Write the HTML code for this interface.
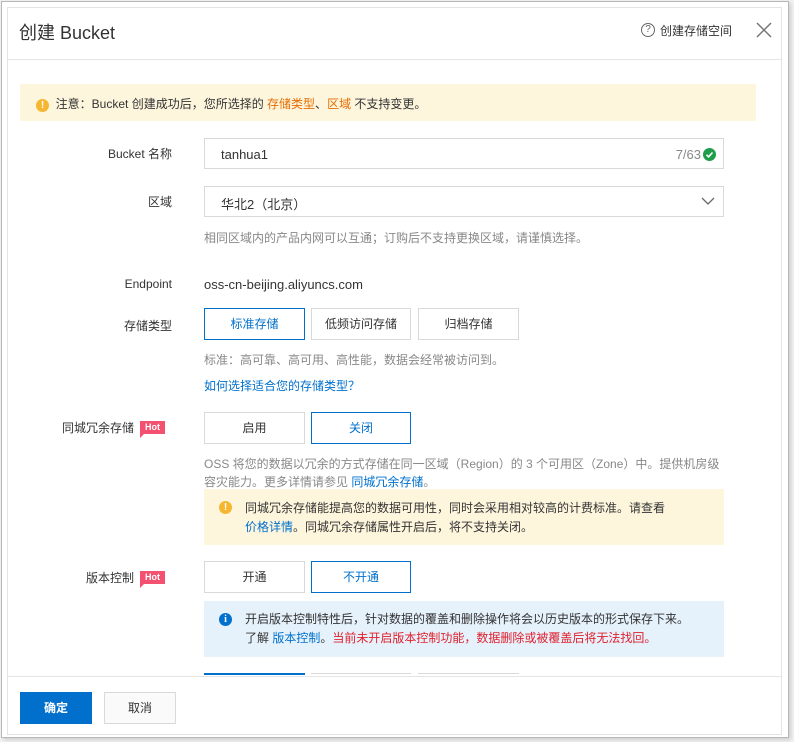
<!DOCTYPE html>
<html><head><meta charset="utf-8">
<style>
*{box-sizing:border-box;margin:0;padding:0}
body{width:794px;height:742px;background:#f2f2f2;font-family:"Liberation Sans","Noto Sans CJK SC",sans-serif;font-size:12px;color:#333;position:relative;overflow:hidden}
.win{position:absolute;left:1px;top:1px;width:788px;height:737px;background:#fff;border:1px solid #b8b8b8;box-shadow:2px 2px 4px rgba(0,0,0,.15)}
.dlg{position:absolute;left:7px;top:7px;width:775px;height:728px;border:1px solid #e3e3e3;background:#fff;overflow:hidden}
.a{position:absolute}
.lbl{position:absolute;right:609px;text-align:right;font-size:12px;color:#333;white-space:nowrap}
.btn{position:absolute;height:32px;border:1px solid #d9d9d9;background:#fff;text-align:center;line-height:30px;font-size:12px;color:#333}
.sel{border-color:#0070cc;color:#0070cc}
.hint{position:absolute;left:196px;color:#888;font-size:12px}
.link{color:#0070cc}
.hot{display:inline-block;position:relative;background:#f4506f;color:#fff;font-size:9px;font-weight:bold;line-height:13px;padding:0 5px;vertical-align:2px;margin-left:6px}
.hot:after{content:"";position:absolute;left:0;bottom:-4px;border-left:4px solid #f4506f;border-bottom:4px solid transparent}
.warn{display:inline-block;width:13px;height:13px;border-radius:50%;background:#f5b731;color:#fff;font-size:10px;font-weight:bold;text-align:center;line-height:13px}
</style></head><body>
<div class="win"></div>
<div class="dlg">
  <div class="a" style="left:11px;top:11px;font-size:18px;color:#333">创建 Bucket</div>
  <div class="a" style="left:633px;top:15px;width:14px;height:14px;border:1px solid #666;border-radius:50%;font-size:10px;text-align:center;line-height:12px;color:#666">?</div>
  <div class="a" style="left:652px;top:14px;font-size:12px;color:#333">创建存储空间</div>
  <svg class="a" style="left:748px;top:14px" width="16" height="16"><path d="M1 1L15 15M15 1L1 15" stroke="#777" stroke-width="1.5"/></svg>
  <div class="a" style="left:0;top:51px;width:775px;border-top:1px solid #e5e5e5"></div>

  <div class="a" style="left:12px;top:76px;width:736px;height:37px;background:#fdf6dd;padding:11px 0 0 16px;color:#333">
    <span class="warn">!</span>&nbsp; 注意：Bucket 创建成功后，您所选择的 <span style="color:#e76c00">存储类型</span>、<span style="color:#e76c00">区域</span> 不支持变更。
  </div>

  <div class="lbl" style="top:137px">Bucket 名称</div>
  <div class="a" style="left:196px;top:130px;width:520px;height:31px;border:1px solid #d9d9d9;padding:8px 0 0 16px;font-size:13px">tanhua1
    <span class="a" style="right:22px;top:8px;color:#888;font-size:13px">7/63</span>
    <span class="a" style="right:7px;top:9px;width:13px;height:13px;border-radius:50%;background:#1e9e4a"><svg width="13" height="13" style="position:absolute;left:0;top:0"><path d="M3.5 6.8L5.6 8.8L9.5 4.5" stroke="#fff" stroke-width="1.6" fill="none"/></svg></span>
  </div>

  <div class="lbl" style="top:185px">区域</div>
  <div class="a" style="left:196px;top:178px;width:520px;height:31px;border:1px solid #d9d9d9;padding:7px 0 0 16px;font-size:13px">华北2（北京）
    <svg class="a" style="right:8px;top:9px" width="14" height="10"><path d="M1 2L7 8L13 2" stroke="#666" stroke-width="1.3" fill="none"/></svg>
  </div>
  <div class="hint" style="top:221px">相同区域内的产品内网可以互通；订购后不支持更换区域，请谨慎选择。</div>

  <div class="lbl" style="top:269px">Endpoint</div>
  <div class="a" style="left:196px;top:269px;font-size:13px;color:#333">oss-cn-beijing.aliyuncs.com</div>

  <div class="lbl" style="top:309px">存储类型</div>
  <div class="btn sel" style="left:196px;top:300px;width:101px">标准存储</div>
  <div class="btn" style="left:303px;top:300px;width:100px">低频访问存储</div>
  <div class="btn" style="left:410px;top:300px;width:101px">归档存储</div>
  <div class="hint" style="top:343px">标准：高可靠、高可用、高性能，数据会经常被访问到。</div>
  <div class="a link" style="left:196px;top:369px">如何选择适合您的存储类型？</div>

  <div class="lbl" style="top:411px;right:616px">同城冗余存储<span class="hot">Hot</span></div>
  <div class="btn" style="left:196px;top:404px;width:101px">启用</div>
  <div class="btn sel" style="left:303px;top:404px;width:100px">关闭</div>
  <div class="hint" style="top:447px;line-height:18px;width:516px">OSS 将您的数据以冗余的方式存储在同一区域（Region）的 3 个可用区（Zone）中。提供机房级容灾能力。更多详情请参见 <span class="link">同城冗余存储</span>。</div>
  <div class="a" style="left:196px;top:481px;width:520px;height:56px;background:#fdf6dd;padding:10px 0 0 15px;line-height:19px;color:#333">
    <span class="warn a" style="left:15px;top:12px">!</span>
    <div style="margin-left:26px">同城冗余存储能提高您的数据可用性，同时会采用相对较高的计费标准。请查看<br><span class="link">价格详情</span>。同城冗余存储属性开启后，将不支持关闭。</div>
  </div>

  <div class="lbl" style="top:561px;right:616px">版本控制<span class="hot">Hot</span></div>
  <div class="btn" style="left:196px;top:553px;width:101px">开通</div>
  <div class="btn sel" style="left:303px;top:553px;width:100px">不开通</div>
  <div class="a" style="left:196px;top:593px;width:520px;height:56px;background:#e6f2fb;padding:9px 0 0 15px;line-height:19px;color:#333">
    <span class="a" style="left:15px;top:12px;width:13px;height:13px;border-radius:50%;background:#0070cc;color:#fff;font-size:10px;font-weight:bold;text-align:center;line-height:13px;font-family:'Liberation Serif',serif">i</span>
    <div style="margin-left:26px">开启版本控制特性后，针对数据的覆盖和删除操作将会以历史版本的形式保存下来。<br>了解 <span class="link">版本控制</span>。<span style="color:#e0202e">当前未开启版本控制功能，数据删除或被覆盖后将无法找回。</span></div>
  </div>
  <div class="a" style="left:196px;top:665px;width:101px;height:10px;border-top:2px solid #0070cc"></div>
  <div class="a" style="left:303px;top:665px;width:100px;height:10px;border-top:1px solid #d9d9d9"></div>
  <div class="a" style="left:410px;top:665px;width:101px;height:10px;border-top:1px solid #d9d9d9"></div>

  <div class="a" style="left:0;top:668px;width:775px;height:60px;background:#fff;border-top:1px solid #e5e5e5"></div>
  <div class="a" style="left:12px;top:684px;width:72px;height:32px;background:#0070cc;color:#fff;text-align:center;line-height:32px;font-weight:bold">确定</div>
  <div class="btn" style="left:96px;top:684px;width:72px;background:#fafafa">取消</div>
</div>
</body></html>
